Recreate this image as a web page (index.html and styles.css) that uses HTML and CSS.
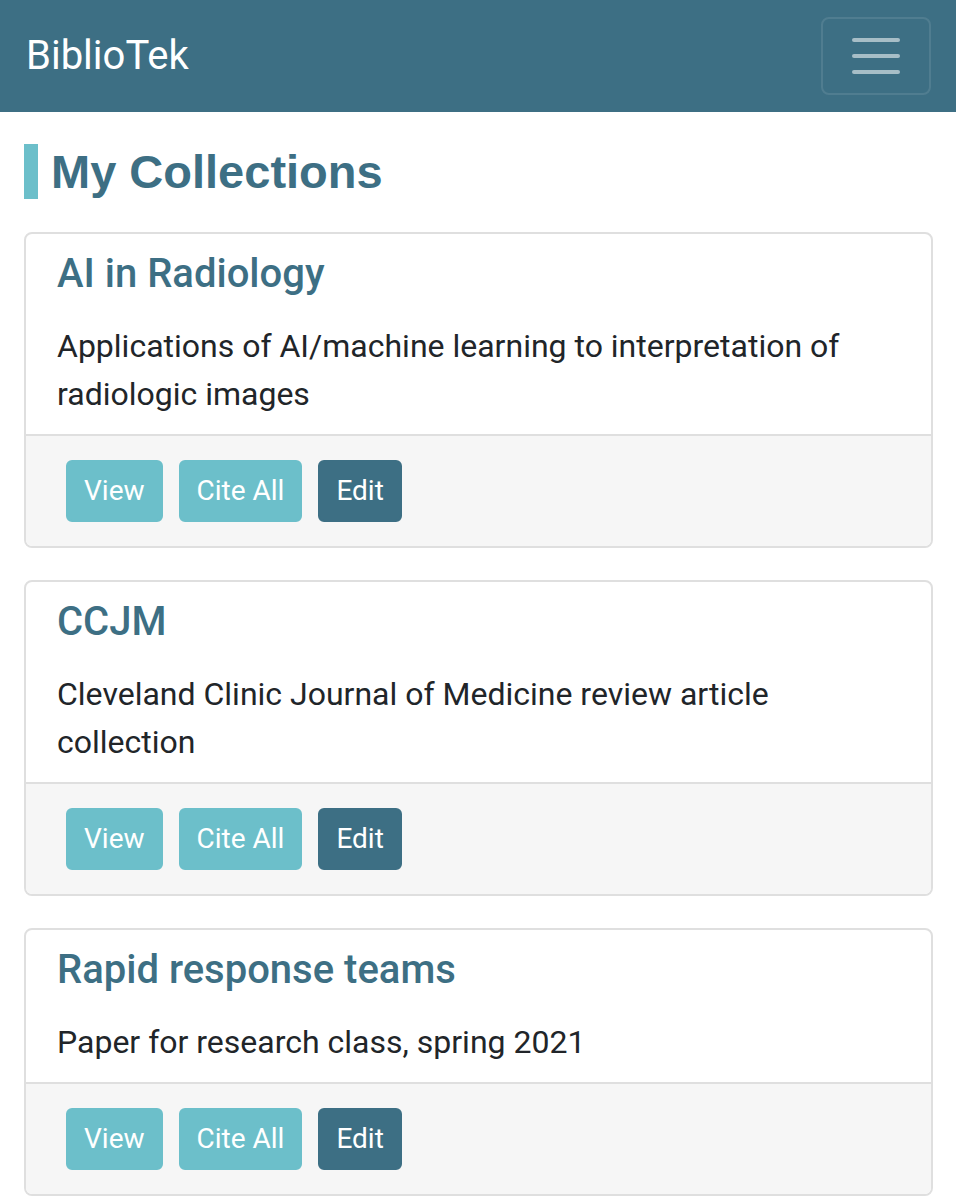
FILE: index.html
```html
<!DOCTYPE html>
<html lang="en">
<head>
<meta charset="utf-8">
<title>BiblioTek</title>
<link rel="stylesheet" href="styles.css">
</head>
<body>
<nav class="navbar">
  <a class="brand" href="#">BiblioTek</a>
  <button class="toggler" type="button" aria-label="Toggle navigation">
    <svg width="48" height="36" viewBox="0 0 48 36"><g stroke="rgba(255,255,255,0.55)" stroke-width="4" stroke-linecap="round"><line x1="2" y1="2" x2="46" y2="2"/><line x1="2" y1="18" x2="46" y2="18"/><line x1="2" y1="34" x2="46" y2="34"/></g></svg>
  </button>
</nav>
<main class="container">
  <h2 class="page-title">My Collections</h2>
  <div class="card">
    <div class="card-body">
      <h3 class="card-title">AI in Radiology</h3>
      <p class="card-text">Applications of AI/machine learning to interpretation of radiologic images</p>
    </div>
    <div class="card-footer">
      <a class="btn btn-info" href="#">View</a>
      <a class="btn btn-info" href="#">Cite All</a>
      <a class="btn btn-dark" href="#">Edit</a>
    </div>
  </div>
  <div class="card">
    <div class="card-body">
      <h3 class="card-title">CCJM</h3>
      <p class="card-text">Cleveland Clinic Journal of Medicine review article collection</p>
    </div>
    <div class="card-footer">
      <a class="btn btn-info" href="#">View</a>
      <a class="btn btn-info" href="#">Cite All</a>
      <a class="btn btn-dark" href="#">Edit</a>
    </div>
  </div>
  <div class="card">
    <div class="card-body">
      <h3 class="card-title">Rapid response teams</h3>
      <p class="card-text">Paper for research class, spring 2021</p>
    </div>
    <div class="card-footer">
      <a class="btn btn-info" href="#">View</a>
      <a class="btn btn-info" href="#">Cite All</a>
      <a class="btn btn-dark" href="#">Edit</a>
    </div>
  </div>
</main>
</body>
</html>
```
FILE: styles.css
```css
* { box-sizing: border-box; }
html, body { margin: 0; padding: 0; }
body {
  font-family: Roboto, "Liberation Sans", Arial, sans-serif;
  font-size: 32px;
  line-height: 1.5;
  color: #212529;
  background: #fff;
}
.navbar {
  height: 112px;
  background: #3d6f84;
  display: flex;
  align-items: center;
  justify-content: space-between;
  padding: 0 25px 0 26px;
}
.brand {
  color: #fff;
  text-decoration: none;
  font-size: 40px;
  line-height: 1.5;
}
.toggler {
  width: 110px;
  height: 78px;
  border: 2px solid rgba(255,255,255,0.1);
  border-radius: 8px;
  background: transparent;
  display: flex;
  align-items: center;
  justify-content: center;
  padding: 0;
}
.container {
  padding: 32px 23px 0 24px;
}
.page-title {
  font-family: "Liberation Sans", Arial, sans-serif;
  font-weight: 700;
  font-size: 47px;
  line-height: 55px;
  color: #3d6f84;
  margin: 0 0 33px 0;
  border-left: 14px solid #6cbfca;
  padding-left: 13px;
}
.card {
  border: 2px solid #dfdfdf;
  border-radius: 8px;
  margin-bottom: 32px;
  overflow: hidden;
}
.card-body {
  padding: 16px 31px 16px 31px;
}
.card-title {
  font-size: 40px;
  font-weight: 500;
  line-height: 48px;
  color: #3d6f84;
  margin: 0 0 24px 0;
}
.card-text {
  margin: 0;
  line-height: 48px;
}
.card-footer {
  background: #f6f6f6;
  border-top: 2px solid #dfdfdf;
  padding: 24px 40px 24px;
  display: flex;
  gap: 16px;
}
.btn {
  display: inline-block;
  font-size: 28px;
  line-height: 42px;
  padding: 8px 16px;
  border: 2px solid transparent;
  border-radius: 6px;
  color: #fff;
  text-decoration: none;
}
.btn-info { background: #6cbfca; border-color: #6cbfca; }
.btn-dark { background: #3d6f84; border-color: #3d6f84; }
```
